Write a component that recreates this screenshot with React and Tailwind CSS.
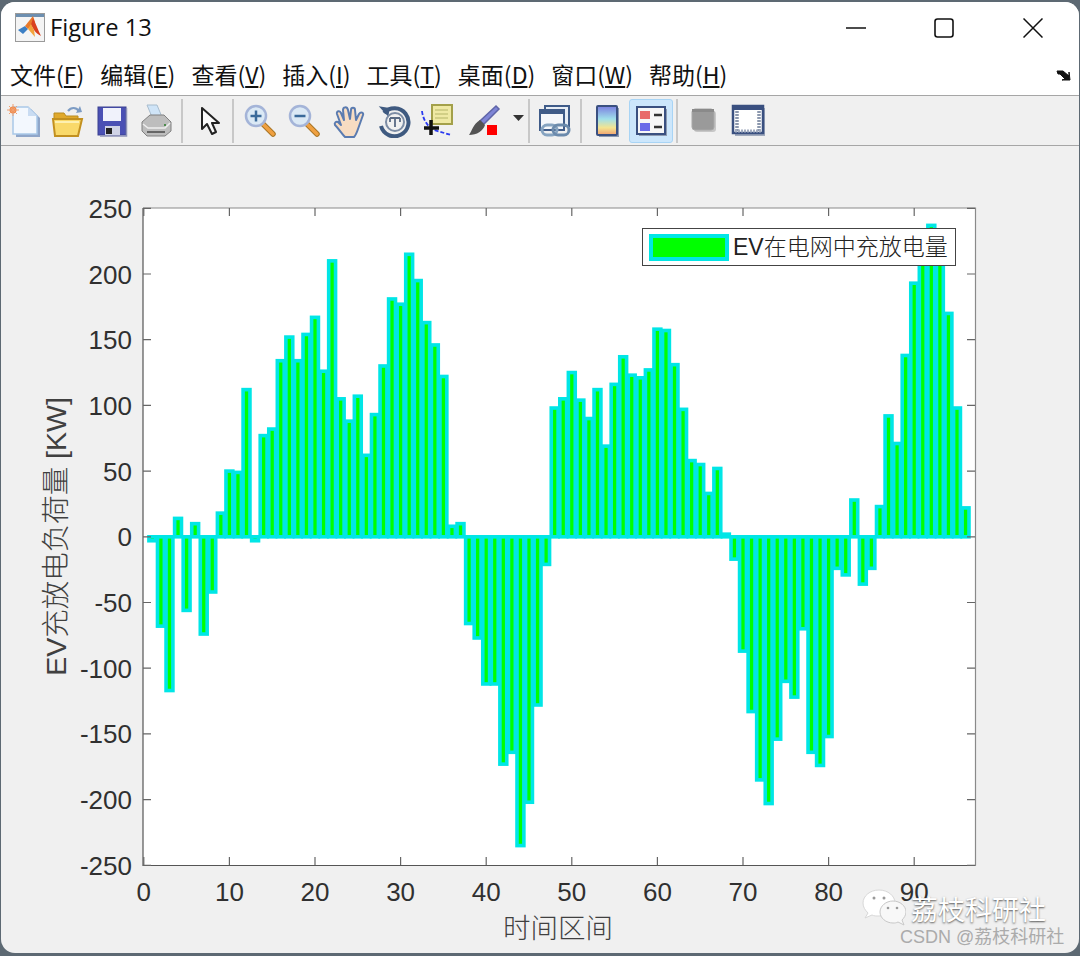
import React from "react";

const values = [
  -3, -68, -117, 14, -56, 10, -74, -42, 18, 50, 49, 112, -3, 77, 82, 134, 152, 134, 154, 167, 126, 210, 105, 88,
  107, 62, 93, 130, 181, 177, 215, 195, 163, 146, 122, 8, 10, -66, -77, -112, -112, -173, -164, -235, -202, -128,
  -21, 98, 105, 125, 104, 90, 112, 69, 116, 137, 123, 121, 127, 158, 157, 131, 97, 58, 55, 33, 52, 2, -17, -87,
  -133, -185, -203, -154, -110, -122, -70, -164, -174, -152, -24, -29, 28, -36, -24, 23, 92, 71, 138, 193, 215,
  237, 225, 170, 98, 22,
];

const sx = (v) => 143.8 + 8.56 * v;
const sy = (v) => 536.8 - 1.314 * v;

const xTicks = [0, 10, 20, 30, 40, 50, 60, 70, 80, 90];
const yTicks = [250, 200, 150, 100, 50, 0, -50, -100, -150, -200, -250];

const menus = [
  ["文件(", "F", ")"],
  ["编辑(", "E", ")"],
  ["查看(", "V", ")"],
  ["插入(", "I", ")"],
  ["工具(", "T", ")"],
  ["桌面(", "D", ")"],
  ["窗口(", "W", ")"],
  ["帮助(", "H", ")"],
];

function Svg({ children, w = 34, h = 34 }) {
  return (
    <svg width={w} height={h} viewBox={`0 0 ${w} ${h}`} className="blur-[0.4px]">
      {children}
    </svg>
  );
}

function MatlabLogo() {
  return (
    <svg width="30" height="30" viewBox="0 0 30 30">
      <rect x="0.5" y="0.5" width="29" height="28" fill="#f4f4f4" stroke="#9a9a9a" />
      <rect x="1" y="1" width="28" height="3" fill="#6d8fb0" />
      <path d="M3 17l7-4 3 3-5 5z" fill="#3c7fc4" />
      <path d="M10 13l8-10 2 6-7 7z" fill="#e8792a" />
      <path d="M18 5c3 6 5 12 8 18-3-2-5-3-7-6l-3-5z" fill="#d9401f" />
      <path d="M13 16l3-5 3 6 1 7z" fill="#f2a33c" />
    </svg>
  );
}

function NewIcon() {
  return (
    <Svg>
      <path d="M9 5h15l9 9v19H9z" fill="#8fa6c9" />
      <path d="M6 3h15l9 9v18H6z" fill="#f3f8fe" stroke="#a9c8e8" strokeWidth="1.5" />
      <path d="M21 3v9h9z" fill="#c9dcf2" />
      <circle cx="6" cy="6" r="3.5" fill="#f08a4a" />
      <path d="M6 0v12M0 6h12M2 2l8 8M10 2l-8 8" stroke="#f0a070" strokeWidth="1" />
    </Svg>
  );
}

function OpenIcon() {
  return (
    <Svg>
      <path d="M3 9h10l2 3h12v6H3z" fill="#e0a92c" stroke="#b98c20" />
      <path d="M2 15h29l-4 17H4z" fill="#f9d96a" stroke="#c2901f" strokeWidth="2" />
      <path d="M4 18h24" stroke="#fdf0b0" strokeWidth="2" />
      <path d="M17 7c3-4 8-4 11 0" fill="none" stroke="#7d9cc4" strokeWidth="2.2" />
      <path d="M25 9l6-1-2-6z" fill="#7d9cc4" />
    </Svg>
  );
}

function SaveIcon() {
  return (
    <Svg>
      <rect x="3" y="3" width="28" height="28" fill="#4a50b4" stroke="#3a4190" />
      <rect x="8" y="4" width="18" height="13" fill="#f0f2fb" />
      <rect x="10" y="22" width="15" height="9" fill="#d0d3e6" />
      <rect x="11" y="24" width="6" height="6" fill="#222" />
      <path d="M31.5 4v28H5" fill="none" stroke="#8e93b8" strokeWidth="1.5" />
    </Svg>
  );
}

function PrintIcon() {
  return (
    <Svg>
      <path d="M8 1h10l5 12H13z" fill="#cfe4f7" stroke="#a8bccd" />
      <path d="M3 18l8-7h14l7 7v9l-6 5H8l-5-5z" fill="#bdbdbd" stroke="#808080" />
      <path d="M4 20l5 4h17l5-5" fill="none" stroke="#eeeeee" strokeWidth="1.5" />
      <path d="M8 28h18" stroke="#666666" strokeWidth="2" />
      <rect x="25" y="20" width="2" height="2" fill="#4b8b4b" />
    </Svg>
  );
}

function PointerIcon() {
  return (
    <Svg>
      <path d="M9 4v21l5-5 5 10 4-2-4-9h7z" fill="#fafafa" stroke="#222" strokeWidth="2" strokeLinejoin="round" />
    </Svg>
  );
}

function ZoomIcon({ plus }) {
  return (
    <Svg>
      <path d="M19 19l11 11" stroke="#a87524" strokeWidth="5.5" strokeLinecap="round" />
      <path d="M19 19l11 11" stroke="#f0a040" strokeWidth="3.5" strokeLinecap="round" />
      <circle cx="13" cy="12" r="10" fill="#dbe9f5" stroke="#a4b4d8" strokeWidth="2.5" />
      <path d="M7.5 12h11" stroke="#3a6a9a" strokeWidth="2.5" />
      {plus && <path d="M13 6.5v11" stroke="#3a6a9a" strokeWidth="2.5" />}
    </Svg>
  );
}

function HandIcon() {
  return (
    <Svg>
      <path
        d="M12 33c-3-3-6-8-10-12-1-2 1-4 3-3l3 3-4-11c-1-3 3-4 4-1l3 7-1-10c0-3 4-4 5 0l2 9 1-9c0-3 4-3 4 0l1 10 3-6c2-3 5-1 4 1l-5 14c-1 3-2 6-4 8z"
        fill="#f7dcc2"
        stroke="#5a7bb0"
        strokeWidth="2"
        strokeLinejoin="round"
      />
    </Svg>
  );
}

function RotateIcon() {
  return (
    <Svg>
      <path d="M7 9a14 14 0 1 1-3 13" fill="none" stroke="#3f5a80" strokeWidth="4" />
      <path d="M1 3h11v9z" fill="#3f5a80" transform="rotate(8 6 8)" />
      <circle cx="18" cy="18" r="9" fill="#f1f1f1" stroke="#7c8ca4" strokeWidth="2" />
      <path d="M13 14h10M18 14v9M13 14v4M23 14v4" stroke="#5a6b84" strokeWidth="1.8" fill="none" />
    </Svg>
  );
}

function CursorIcon() {
  return (
    <Svg>
      <rect x="11" y="1" width="20" height="19" fill="#efe9a4" stroke="#a3a04a" strokeWidth="2" />
      <path d="M14 6h13M14 10h13M14 14h13" stroke="#c9c67c" strokeWidth="1.5" />
      <path d="M1 7c1 9 6 16 12 19l17 5" fill="none" stroke="#2b3bf0" strokeWidth="1.8" strokeDasharray="4 2" />
      <path d="M10 16v15M3 24h15" stroke="#111" strokeWidth="3.5" />
    </Svg>
  );
}

function BrushIcon() {
  return (
    <Svg>
      <path d="M29 2l3 3-15 15-4-3z" fill="#7f86d6" stroke="#5f65a8" strokeWidth="1.5" />
      <path d="M13 16l5 5c-2 6-8 10-16 10 3-4 4-11 11-15z" fill="#545454" />
      <rect x="20" y="21" width="10" height="10" fill="#ff0000" />
    </Svg>
  );
}

function LinkIcon() {
  return (
    <Svg>
      <rect x="7" y="2" width="24" height="20" fill="#e7edf5" stroke="#3f5b88" strokeWidth="2" />
      <rect x="2" y="6" width="24" height="20" fill="#f4f6fa" stroke="#3f5b88" strokeWidth="2" />
      <rect x="2" y="6" width="24" height="4" fill="#3f5b88" />
      <rect x="4" y="21" width="15" height="10" rx="5" fill="none" stroke="#86a3c0" strokeWidth="3" />
      <rect x="15" y="21" width="16" height="10" rx="5" fill="none" stroke="#6b8aac" strokeWidth="3" />
    </Svg>
  );
}

function ColorbarIcon() {
  return (
    <Svg>
      <defs>
        <linearGradient id="cb" x1="0" y1="0" x2="0" y2="1">
          <stop offset="0" stopColor="#7a7ee0" />
          <stop offset="0.45" stopColor="#a0e0ea" />
          <stop offset="0.75" stopColor="#f4e490" />
          <stop offset="1" stopColor="#f0a070" />
        </linearGradient>
      </defs>
      <rect x="9" y="4" width="20" height="29" fill="#8d9ab0" />
      <rect x="7" y="2" width="20" height="29" rx="1" fill="url(#cb)" stroke="#3a5080" strokeWidth="2" />
    </Svg>
  );
}

function LegendIcon() {
  return (
    <Svg>
      <rect x="5" y="5" width="28" height="27" fill="#8d9ab0" />
      <rect x="3" y="3" width="28" height="27" fill="#f6f6f6" stroke="#3a5080" strokeWidth="2" />
      <rect x="6" y="7" width="10" height="8" fill="#e86a6a" />
      <rect x="6" y="19" width="10" height="8" fill="#6a6ae8" />
      <path d="M20 11h8M20 23h8" stroke="#333" strokeWidth="2.5" />
    </Svg>
  );
}

function GrayIcon() {
  return (
    <Svg>
      <rect x="7" y="7" width="22" height="21" rx="3" fill="#c7c7c7" />
      <rect x="5" y="5" width="22" height="21" rx="3" fill="#9a9a9a" stroke="#a8a8a8" />
      <rect x="5" y="5" width="22" height="3" fill="#8a8a8a" />
    </Svg>
  );
}

function PanelIcon() {
  return (
    <Svg>
      <rect x="4" y="4" width="31" height="28" fill="#9fa9bc" />
      <rect x="2" y="2" width="30" height="27" fill="#fff" stroke="#3a5080" strokeWidth="2.5" />
      <rect x="2" y="2" width="30" height="4" fill="#3a5080" />
      <path d="M6 7v20M28 7v20" stroke="#8b97ad" strokeWidth="3.5" strokeDasharray="2 1" />
      <path d="M4 27h26" stroke="#a2acbf" strokeWidth="3" strokeDasharray="2 1" />
    </Svg>
  );
}

function ToolButton({ children, active, className = "" }) {
  return (
    <div
      className={`flex h-[44px] w-[44px] shrink-0 items-center justify-center rounded-[3px] ${
        active ? "border border-[#a8d4f5] bg-[#cce6fb]" : ""
      } ${className}`}
    >
      {children}
    </div>
  );
}

function Separator({ className = "" }) {
  return <div className={`h-[44px] w-[2px] shrink-0 bg-[#c8c8c8] ${className}`} />;
}

function Chart() {
  return (
    <svg className="block h-full w-full" viewBox="1 146 1078 807">
      <rect x="143" y="208" width="832.5" height="657.5" fill="#ffffff" />
      {values.map((v, i) => {
        const x = sx(i + 1);
        const top = Math.min(sy(v), sy(0));
        const h = Math.abs(sy(v) - sy(0));
        return (
          <rect
            key={i}
            x={x - 3.43}
            y={top}
            width="6.86"
            height={h}
            fill="#00ff00"
            stroke="#00e6e6"
            strokeWidth="3.6"
          />
        );
      })}
      <path d="M143 208H975.5V865.5" fill="none" stroke="#8a8a8a" strokeWidth="1.2" />
      <path d="M143 208V865.5H975.5" fill="none" stroke="#555555" strokeWidth="1.2" />
      {xTicks.map((t) => (
        <g key={t}>
          <path d={`M${sx(t)} 865V857M${sx(t)} 208V216`} stroke="#666666" strokeWidth="1.2" />
          <text
            x={sx(t)}
            y="901"
            textAnchor="middle"
            fontFamily="Liberation Sans, sans-serif"
            fontSize="26"
            fill="#303030"
          >
            {t}
          </text>
        </g>
      ))}
      {yTicks.map((t) => (
        <g key={t}>
          <path d={`M143 ${sy(t)}H151M975 ${sy(t)}H967`} stroke="#666666" strokeWidth="1.2" />
          <text
            x="132"
            y={sy(t) + 9.5}
            textAnchor="end"
            fontFamily="Liberation Sans, sans-serif"
            fontSize="26"
            fill="#303030"
          >
            {t}
          </text>
        </g>
      ))}
      <text
        transform="translate(66 536.5) rotate(-90)"
        textAnchor="middle"
        fontFamily="Liberation Sans, Noto Sans CJK SC, sans-serif"
        fontSize="28.5"
        fontWeight="300"
        fill="#404040"
      >
        EV充放电负荷量 [KW]
      </text>
      <text
        x="558"
        y="938"
        textAnchor="middle"
        fontFamily="Noto Sans CJK SC, sans-serif"
        fontSize="27.5"
        fontWeight="300"
        fill="#404040"
      >
        时间区间
      </text>
    </svg>
  );
}

export default function App() {
  return (
    <div className="h-[956px] w-[1080px] bg-[#5d6973] px-[1px] pb-[3px] pt-[2px] font-['Noto_Sans_CJK_SC',sans-serif]">
      <div className="flex h-full flex-col overflow-hidden rounded-[14px] bg-[#f0f0f0]">
        {/* Title bar */}
        <div className="flex h-[52px] shrink-0 items-center bg-white pl-[14px]">
          <MatlabLogo />
          <span className="ml-[5px] font-['Open_Sans',sans-serif] text-[23.7px] text-[#111]">Figure 13</span>
          <div className="ml-auto flex items-center pr-[36px]">
            <svg width="20" height="20" viewBox="0 0 20 20" className="mr-[68px]">
              <path d="M0 10H20" stroke="#111" strokeWidth="1.6" />
            </svg>
            <svg width="20" height="20" viewBox="0 0 20 20" className="mr-[69px]">
              <rect x="1" y="1" width="18" height="18" rx="2.5" fill="none" stroke="#111" strokeWidth="1.6" />
            </svg>
            <svg width="20" height="20" viewBox="0 0 20 20">
              <path d="M0.5 0.5L19.5 19.5M19.5 0.5L0.5 19.5" stroke="#111" strokeWidth="1.5" />
            </svg>
          </div>
        </div>

        {/* Menu bar */}
        <div className="flex h-[42px] shrink-0 items-center gap-[16px] border-b border-[#a6a6a6] bg-white pl-[9px] text-[23px] leading-none text-[#111]">
          {menus.map(([a, k, b]) => (
            <span key={k} className="whitespace-nowrap">
              {a}
              <span className="underline underline-offset-2">{k}</span>
              {b}
            </span>
          ))}
          <svg width="16" height="12" viewBox="0 0 16 12" className="ml-auto mr-[7px]">
            <path d="M1 2h6l6 5V3l1 8H6l3-1-5-5H2z" fill="#111" stroke="#111" />
          </svg>
        </div>

        {/* Toolbar */}
        <div className="flex h-[50px] shrink-0 items-center border-b border-[#a6a6a6] bg-[#f0f0f0] pl-[1px]">
          <ToolButton><NewIcon /></ToolButton>
          <ToolButton><OpenIcon /></ToolButton>
          <ToolButton><SaveIcon /></ToolButton>
          <ToolButton><PrintIcon /></ToolButton>
          <Separator className="ml-[3px]" />
          <ToolButton className="ml-[5px]"><PointerIcon /></ToolButton>
          <Separator />
          <ToolButton className="ml-[4px]"><ZoomIcon plus /></ToolButton>
          <ToolButton><ZoomIcon /></ToolButton>
          <ToolButton className="ml-[2px]"><HandIcon /></ToolButton>
          <ToolButton><RotateIcon /></ToolButton>
          <ToolButton><CursorIcon /></ToolButton>
          <ToolButton className="ml-[2px]"><BrushIcon /></ToolButton>
          <svg width="12" height="7" viewBox="0 0 12 7" className="ml-[7px] mb-[4px] mr-[3px] shrink-0">
            <path d="M0 0h11L5.5 6z" fill="#333" />
          </svg>
          <Separator />
          <ToolButton className="ml-[3px]"><LinkIcon /></ToolButton>
          <Separator className="ml-[3px]" />
          <ToolButton className="ml-[3px]"><ColorbarIcon /></ToolButton>
          <ToolButton active><LegendIcon /></ToolButton>
          <Separator className="ml-[3px]" />
          <ToolButton className="ml-[4px]"><GrayIcon /></ToolButton>
          <ToolButton><PanelIcon /></ToolButton>
        </div>

        {/* Figure area */}
        <div className="relative min-h-0 flex-1">
          <Chart />

          {/* Legend */}
          <div className="absolute left-[641px] top-[82px] flex h-[38px] w-[314px] items-center border border-[#444] bg-white pl-[6px] text-[23px] leading-none text-[#222]">
            <div className="h-[27px] w-[80px] border-[4px] border-[#00e6e6] bg-[#00ff00]" />
            <span className="ml-[4px] whitespace-nowrap font-['Liberation_Sans','Noto_Sans_CJK_SC',sans-serif] font-light">
              EV在电网中充放电量
            </span>
          </div>

          {/* Watermark */}
          <div className="absolute left-[861px] top-[743px] flex items-center">
            <svg width="44" height="38" viewBox="0 0 44 38">
              <path d="M17 1C8 1 1 7 1 14c0 4 2 7 5 10l-3 5 7-3c2 1 4 1 7 1 9 0 16-6 16-13S26 1 17 1z" fill="#ffffff" stroke="#d8d8d8" />
              <path d="M31 12c-7 0-13 5-13 11s6 11 13 11c2 0 3 0 5-1l6 3-2-5c2-2 4-5 4-8 0-6-6-11-13-11z" fill="#f8f8f8" stroke="#c8c8c8" />
              <circle cx="12" cy="9" r="1.5" fill="#9a9a9a" />
              <circle cx="22" cy="9" r="1.5" fill="#9a9a9a" />
              <circle cx="26" cy="19" r="1.3" fill="#9a9a9a" />
              <circle cx="35" cy="19" r="1.3" fill="#9a9a9a" />
            </svg>
            <span className="ml-[5px] whitespace-nowrap text-[27px] leading-none text-white [text-shadow:0_1px_2px_#555]">
              荔枝科研社
            </span>
          </div>
          <div className="absolute left-[899px] top-[782px] whitespace-nowrap font-['Liberation_Sans','Noto_Sans_CJK_SC',sans-serif] text-[18px] leading-none text-[#ababab]">
            CSDN @荔枝科研社
          </div>
        </div>
      </div>
    </div>
  );
}
